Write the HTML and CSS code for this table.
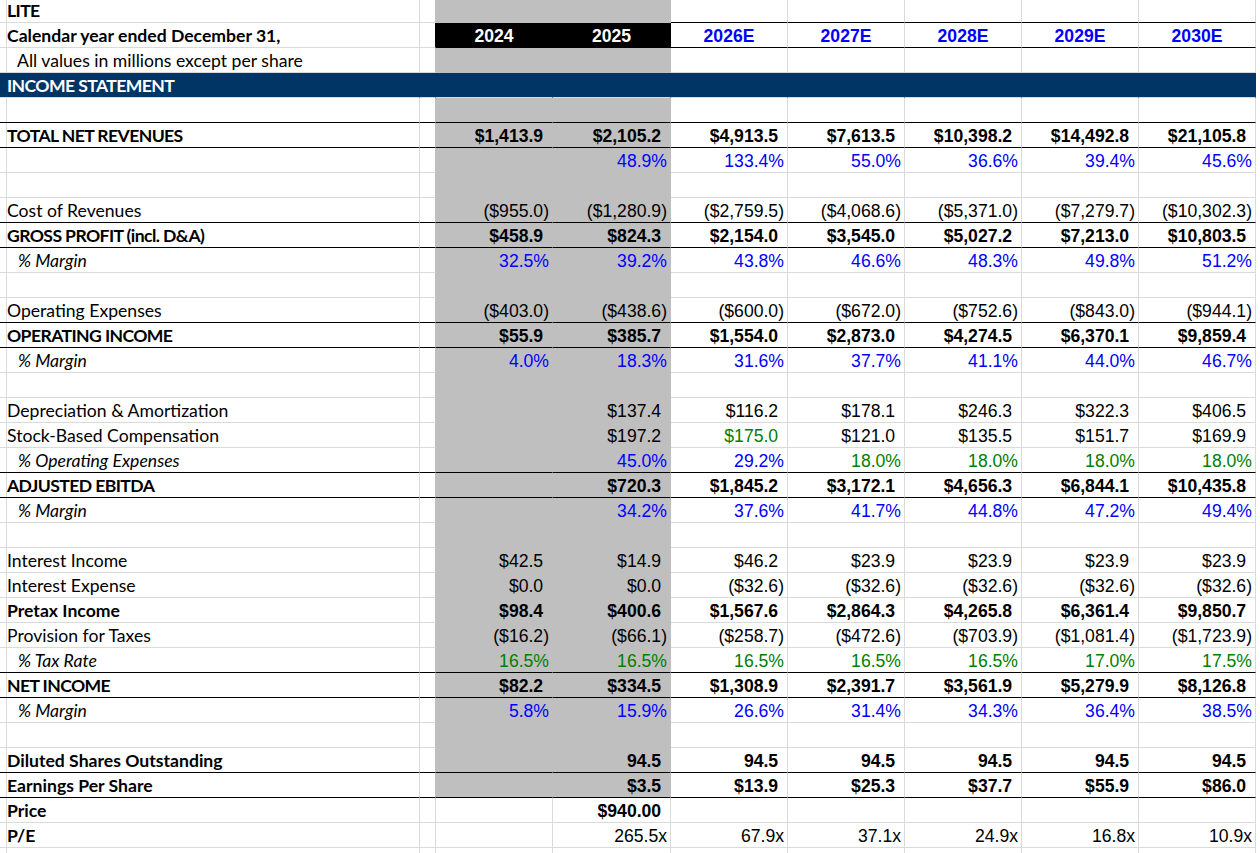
FILE: index.html
```html
<!DOCTYPE html>
<html lang="en">
<head>
<meta charset="utf-8">
<title>LITE – Income Statement</title>
<link rel="stylesheet" href="styles.css">
</head>
<body>
<div class="sheet">
  <div class="r first">
    <div></div><div class="b B cap">LITE</div><div class="cg"></div><div class="g"></div><div class="g"></div>
    <div class="tb"></div><div class="tb"></div><div class="tb"></div><div class="tb"></div><div class="tb"></div>
  </div>
  <div class="r hd">
    <div></div><div class="b B">Calendar year ended December 31,</div><div class="ck"></div>
    <div class="k">2024</div><div class="k">2025</div>
    <div class="hy">2026E</div><div class="hy">2027E</div><div class="hy">2028E</div><div class="hy">2029E</div><div class="hy">2030E</div>
  </div>
  <div class="r">
    <div></div><div class="b ind">All values in millions except per share</div><div class="cg"></div><div class="g"></div><div class="g"></div>
    <div></div><div></div><div></div><div></div><div></div>
  </div>
  <div class="r nv">
    <div></div><div class="b B cap">INCOME STATEMENT</div><div></div><div></div><div></div>
    <div></div><div></div><div></div><div></div><div></div>
  </div>
  <div class="r ul">
    <div></div><div class="b"></div><div class="cg"></div><div class="g"></div><div class="g"></div>
    <div></div><div></div><div></div><div></div><div></div>
  </div>
  <div class="r ul">
    <div></div><div class="b B cap">TOTAL NET REVENUES</div><div class="cg"></div>
    <div class="g B p">$1,413.9</div><div class="g B p">$2,105.2</div>
    <div class="B p">$4,913.5</div><div class="B p">$7,613.5</div><div class="B p">$10,398.2</div><div class="B p">$14,492.8</div><div class="B p">$21,105.8</div>
  </div>
  <div class="r">
    <div></div><div class="b"></div><div class="cg"></div>
    <div class="g"></div><div class="g bl">48.9%</div>
    <div class="bl">133.4%</div><div class="bl">55.0%</div><div class="bl">36.6%</div><div class="bl">39.4%</div><div class="bl">45.6%</div>
  </div>
  <div class="r">
    <div></div><div class="b"></div><div class="cg"></div><div class="g"></div><div class="g"></div>
    <div></div><div></div><div></div><div></div><div></div>
  </div>
  <div class="r ul">
    <div></div><div class="b">Cost of Revenues</div><div class="cg"></div>
    <div class="g">($955.0)</div><div class="g">($1,280.9)</div>
    <div>($2,759.5)</div><div>($4,068.6)</div><div>($5,371.0)</div><div>($7,279.7)</div><div>($10,302.3)</div>
  </div>
  <div class="r ul">
    <div></div><div class="b B cap">GROSS PROFIT (incl. D&amp;A)</div><div class="cg"></div>
    <div class="g B p">$458.9</div><div class="g B p">$824.3</div>
    <div class="B p">$2,154.0</div><div class="B p">$3,545.0</div><div class="B p">$5,027.2</div><div class="B p">$7,213.0</div><div class="B p">$10,803.5</div>
  </div>
  <div class="r">
    <div></div><div class="b i">% Margin</div><div class="cg"></div>
    <div class="g bl">32.5%</div><div class="g bl">39.2%</div>
    <div class="bl">43.8%</div><div class="bl">46.6%</div><div class="bl">48.3%</div><div class="bl">49.8%</div><div class="bl">51.2%</div>
  </div>
  <div class="r">
    <div></div><div class="b"></div><div class="cg"></div><div class="g"></div><div class="g"></div>
    <div></div><div></div><div></div><div></div><div></div>
  </div>
  <div class="r ul">
    <div></div><div class="b">Operating Expenses</div><div class="cg"></div>
    <div class="g">($403.0)</div><div class="g">($438.6)</div>
    <div>($600.0)</div><div>($672.0)</div><div>($752.6)</div><div>($843.0)</div><div>($944.1)</div>
  </div>
  <div class="r ul">
    <div></div><div class="b B cap">OPERATING INCOME</div><div class="cg"></div>
    <div class="g B p">$55.9</div><div class="g B p">$385.7</div>
    <div class="B p">$1,554.0</div><div class="B p">$2,873.0</div><div class="B p">$4,274.5</div><div class="B p">$6,370.1</div><div class="B p">$9,859.4</div>
  </div>
  <div class="r">
    <div></div><div class="b i">% Margin</div><div class="cg"></div>
    <div class="g bl">4.0%</div><div class="g bl">18.3%</div>
    <div class="bl">31.6%</div><div class="bl">37.7%</div><div class="bl">41.1%</div><div class="bl">44.0%</div><div class="bl">46.7%</div>
  </div>
  <div class="r">
    <div></div><div class="b"></div><div class="cg"></div><div class="g"></div><div class="g"></div>
    <div></div><div></div><div></div><div></div><div></div>
  </div>
  <div class="r">
    <div></div><div class="b">Depreciation &amp; Amortization</div><div class="cg"></div>
    <div class="g"></div><div class="g p">$137.4</div>
    <div class="p">$116.2</div><div class="p">$178.1</div><div class="p">$246.3</div><div class="p">$322.3</div><div class="p">$406.5</div>
  </div>
  <div class="r">
    <div></div><div class="b">Stock-Based Compensation</div><div class="cg"></div>
    <div class="g"></div><div class="g p">$197.2</div>
    <div class="p gr">$175.0</div><div class="p">$121.0</div><div class="p">$135.5</div><div class="p">$151.7</div><div class="p">$169.9</div>
  </div>
  <div class="r ul">
    <div></div><div class="b i">% Operating Expenses</div><div class="cg"></div>
    <div class="g"></div><div class="g bl">45.0%</div>
    <div class="bl">29.2%</div><div class="gr">18.0%</div><div class="gr">18.0%</div><div class="gr">18.0%</div><div class="gr">18.0%</div>
  </div>
  <div class="r ul">
    <div></div><div class="b B cap">ADJUSTED EBITDA</div><div class="cg"></div>
    <div class="g"></div><div class="g B p">$720.3</div>
    <div class="B p">$1,845.2</div><div class="B p">$3,172.1</div><div class="B p">$4,656.3</div><div class="B p">$6,844.1</div><div class="B p">$10,435.8</div>
  </div>
  <div class="r">
    <div></div><div class="b i">% Margin</div><div class="cg"></div>
    <div class="g"></div><div class="g bl">34.2%</div>
    <div class="bl">37.6%</div><div class="bl">41.7%</div><div class="bl">44.8%</div><div class="bl">47.2%</div><div class="bl">49.4%</div>
  </div>
  <div class="r">
    <div></div><div class="b"></div><div class="cg"></div><div class="g"></div><div class="g"></div>
    <div></div><div></div><div></div><div></div><div></div>
  </div>
  <div class="r">
    <div></div><div class="b">Interest Income</div><div class="cg"></div>
    <div class="g p">$42.5</div><div class="g p">$14.9</div>
    <div class="p">$46.2</div><div class="p">$23.9</div><div class="p">$23.9</div><div class="p">$23.9</div><div class="p">$23.9</div>
  </div>
  <div class="r">
    <div></div><div class="b">Interest Expense</div><div class="cg"></div>
    <div class="g p">$0.0</div><div class="g p">$0.0</div>
    <div>($32.6)</div><div>($32.6)</div><div>($32.6)</div><div>($32.6)</div><div>($32.6)</div>
  </div>
  <div class="r">
    <div></div><div class="b B">Pretax Income</div><div class="cg"></div>
    <div class="g B p">$98.4</div><div class="g B p">$400.6</div>
    <div class="B p">$1,567.6</div><div class="B p">$2,864.3</div><div class="B p">$4,265.8</div><div class="B p">$6,361.4</div><div class="B p">$9,850.7</div>
  </div>
  <div class="r">
    <div></div><div class="b">Provision for Taxes</div><div class="cg"></div>
    <div class="g">($16.2)</div><div class="g">($66.1)</div>
    <div>($258.7)</div><div>($472.6)</div><div>($703.9)</div><div>($1,081.4)</div><div>($1,723.9)</div>
  </div>
  <div class="r ul">
    <div></div><div class="b i">% Tax Rate</div><div class="cg"></div>
    <div class="g gr">16.5%</div><div class="g gr">16.5%</div>
    <div class="gr">16.5%</div><div class="gr">16.5%</div><div class="gr">16.5%</div><div class="gr">17.0%</div><div class="gr">17.5%</div>
  </div>
  <div class="r ul">
    <div></div><div class="b B cap">NET INCOME</div><div class="cg"></div>
    <div class="g B p">$82.2</div><div class="g B p">$334.5</div>
    <div class="B p">$1,308.9</div><div class="B p">$2,391.7</div><div class="B p">$3,561.9</div><div class="B p">$5,279.9</div><div class="B p">$8,126.8</div>
  </div>
  <div class="r">
    <div></div><div class="b i">% Margin</div><div class="cg"></div>
    <div class="g bl">5.8%</div><div class="g bl">15.9%</div>
    <div class="bl">26.6%</div><div class="bl">31.4%</div><div class="bl">34.3%</div><div class="bl">36.4%</div><div class="bl">38.5%</div>
  </div>
  <div class="r">
    <div></div><div class="b"></div><div class="cg"></div><div class="g"></div><div class="g"></div>
    <div></div><div></div><div></div><div></div><div></div>
  </div>
  <div class="r ul">
    <div></div><div class="b B">Diluted Shares Outstanding</div><div class="cg"></div>
    <div class="g"></div><div class="g B p">94.5</div>
    <div class="B p">94.5</div><div class="B p">94.5</div><div class="B p">94.5</div><div class="B p">94.5</div><div class="B p">94.5</div>
  </div>
  <div class="r ul">
    <div></div><div class="b B">Earnings Per Share</div><div class="cg"></div>
    <div class="g"></div><div class="g B p">$3.5</div>
    <div class="B p">$13.9</div><div class="B p">$25.3</div><div class="B p">$37.7</div><div class="B p">$55.9</div><div class="B p">$86.0</div>
  </div>
  <div class="r">
    <div></div><div class="b B">Price</div><div></div>
    <div></div><div class="B p">$940.00</div>
    <div></div><div></div><div></div><div></div><div></div>
  </div>
  <div class="r">
    <div></div><div class="b B">P/E</div><div></div>
    <div></div><div>265.5x</div>
    <div>67.9x</div><div>37.1x</div><div>24.9x</div><div>16.8x</div><div>10.9x</div>
  </div>
  <div class="r">
    <div></div><div class="b"></div><div></div><div></div><div></div>
    <div></div><div></div><div></div><div></div><div></div>
  </div>
</div>
</body>
</html>
```
FILE: styles.css
```css
html, body {
  margin: 0;
  padding: 0;
  background: #ffffff;
}

.sheet {
  width: 1260px;
  height: 853px;
  overflow: hidden;
}

.r {
  display: grid;
  grid-template-columns: 4px 416px 16px 117px 118px 117px 117px 117px 117px 117px;
}

.r > div {
  box-sizing: border-box;
  height: 25px;
  padding: 3px 3px 0 3px;
  border-right: 1px solid #dadada;
  border-bottom: 1px solid #dadada;
  font-family: "Liberation Sans", Arial, sans-serif;
  font-size: 17.6px;
  line-height: 20px;
  color: #000000;
  text-align: right;
  white-space: nowrap;
  overflow: hidden;
}

.r > .b {
  text-align: left;
  font-family: Lato, "Noto Sans", sans-serif;
  padding-left: 3px;
  overflow: visible;
}

.r.first > div {
  height: 23px;
  padding-top: 1px;
}

.r > .B { font-weight: 700; }
.r > .cap { letter-spacing: -0.6px; }
.r > .i { font-style: italic; padding-left: 14px; }
.r > .ind { padding-left: 13px; }
.r > .bl { color: #0000ff; }
.r > .gr { color: #008000; }
.r > .p { padding-right: calc(3px + 0.333em); }

.r > .g {
  background: #bfbfbf;
  border-right-color: #bfbfbf;
  border-bottom-color: #bfbfbf;
}

.r > .cg { border-right-color: #bfbfbf; }

.r > .tb { border-bottom-color: #000000; }

.r.hd > div { border-bottom-color: #000000; }
.r.hd > .b,
.r.hd > div:first-child,
.r.hd > .ck { border-bottom-color: #dadada; }
.r.hd > .ck { border-right-color: #000000; }

.r > .k {
  background: #000000;
  color: #ffffff;
  font-weight: 700;
  text-align: center;
  border-right-color: #000000;
  border-bottom-color: #000000;
}

.r > .hy {
  color: #0000ff;
  font-weight: 700;
  text-align: center;
}

.r.nv > div {
  background: #003566;
  border-right-color: #003566;
  color: #ffffff;
}

.r.ul > div { border-bottom-color: #000000; }
```
